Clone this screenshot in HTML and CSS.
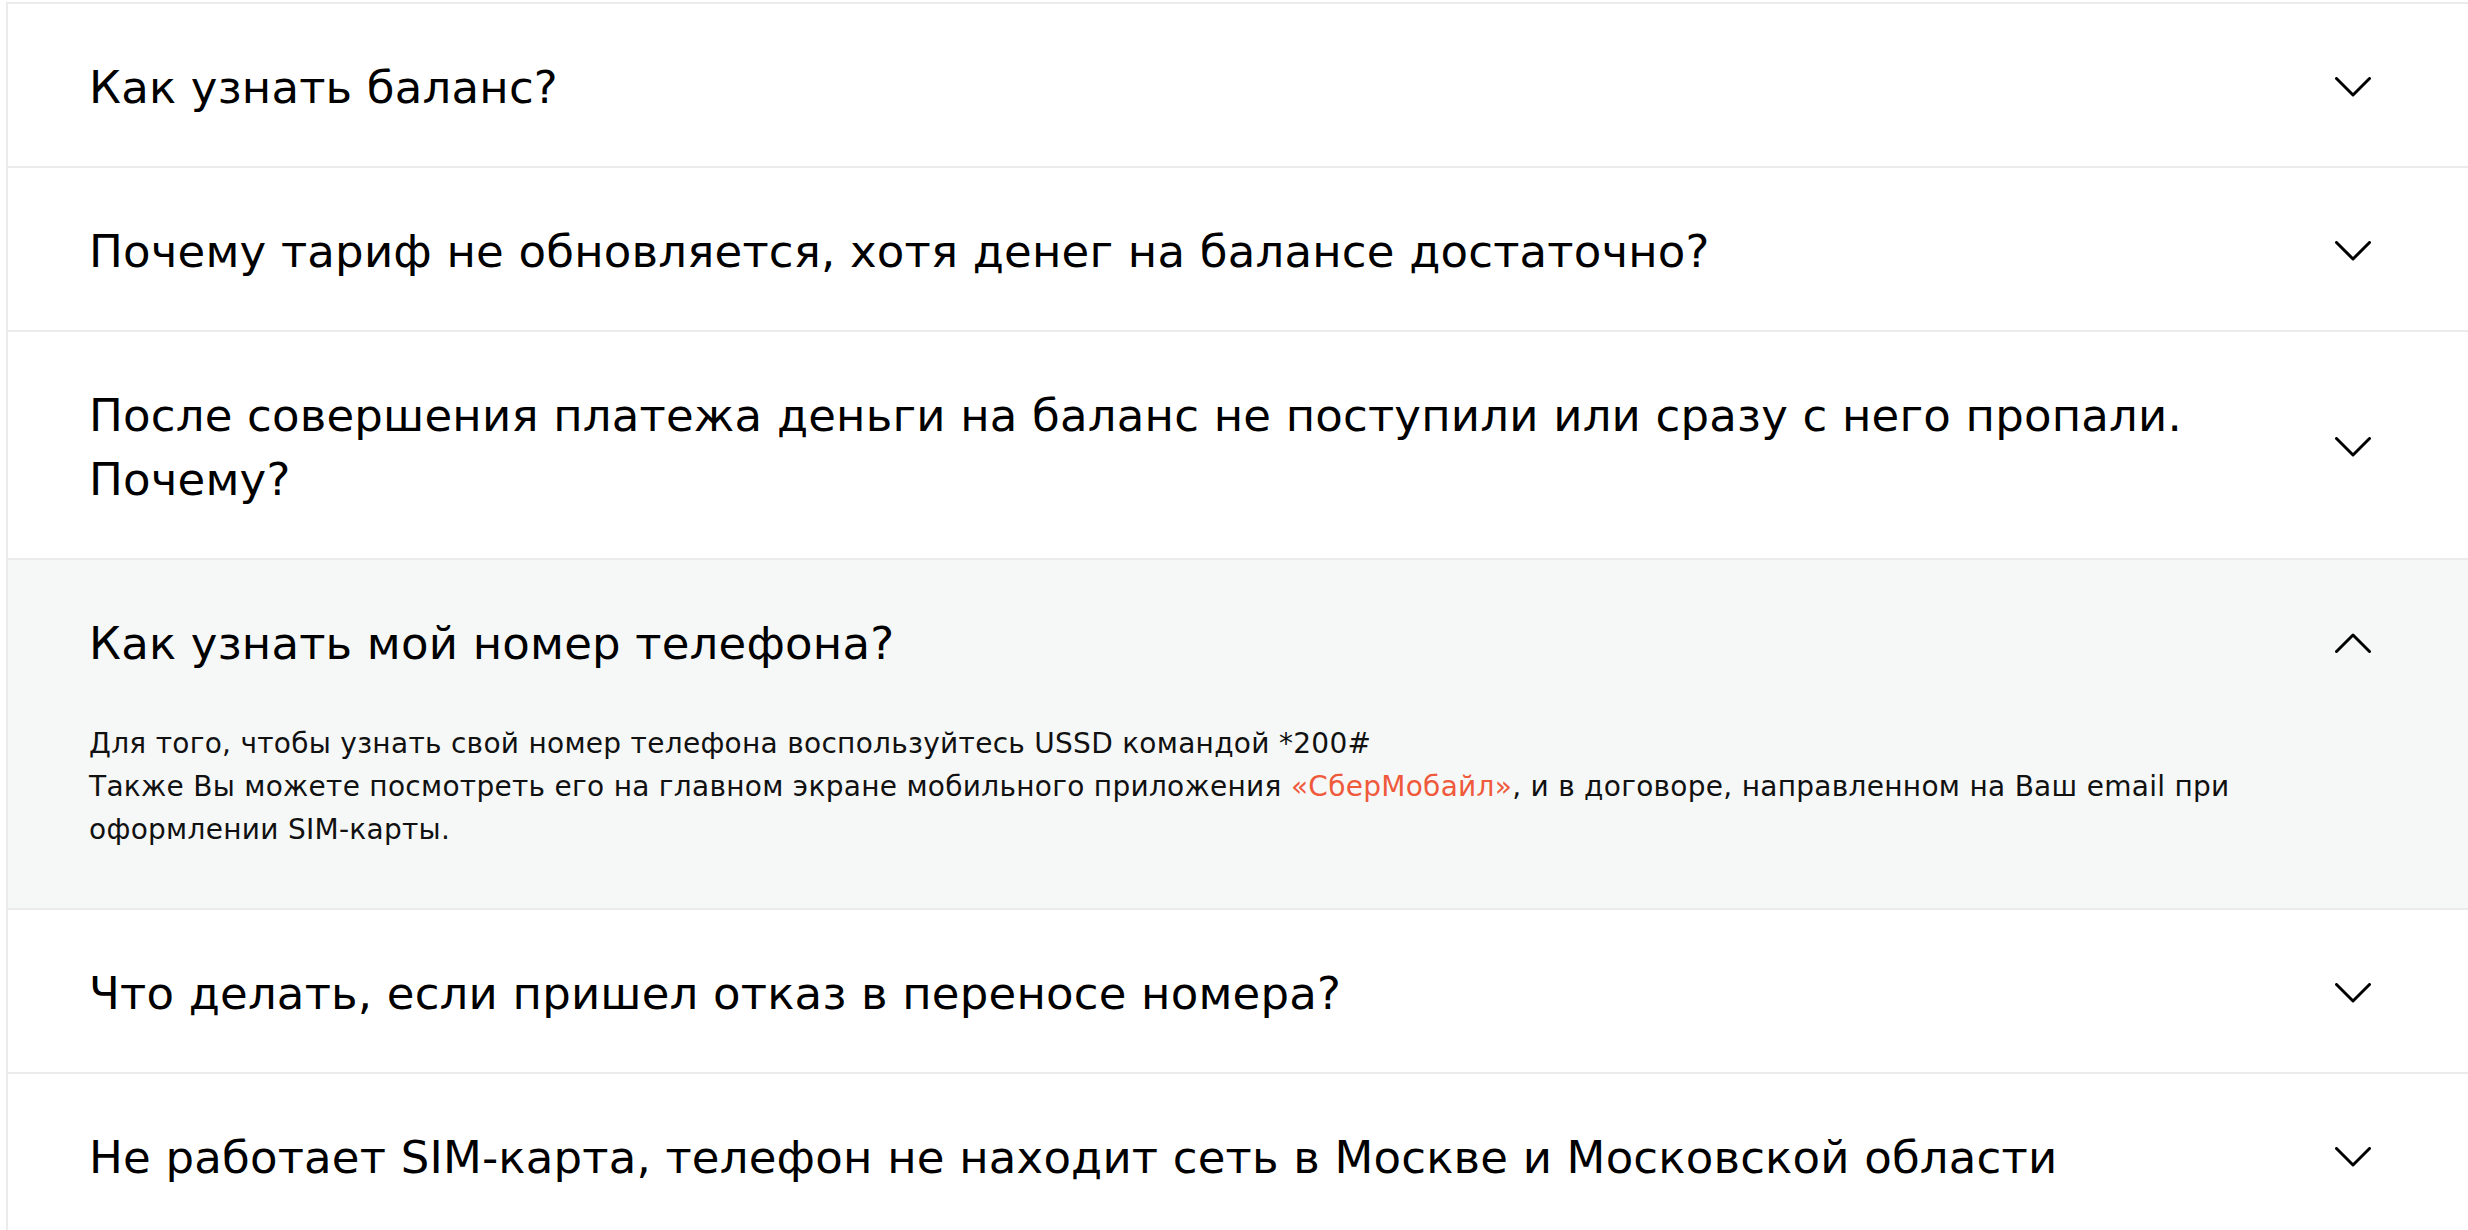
FILE: index.html
```html
<!DOCTYPE html>
<html lang="ru">
<head>
<meta charset="utf-8">
<title>FAQ</title>
<link rel="stylesheet" href="styles.css">
</head>
<body>
<div class="faq">
  <div class="item">
    <div class="head">
      <h3 class="q">Как узнать баланс?</h3>
      <svg class="chev" viewBox="0 0 36 20" width="36" height="20"><polyline points="1.5,1.5 18,18 34.5,1.5"/></svg>
    </div>
  </div>
  <div class="item">
    <div class="head">
      <h3 class="q">Почему тариф не обновляется, хотя денег на балансе достаточно?</h3>
      <svg class="chev" viewBox="0 0 36 20" width="36" height="20"><polyline points="1.5,1.5 18,18 34.5,1.5"/></svg>
    </div>
  </div>
  <div class="item">
    <div class="head">
      <h3 class="q">После совершения платежа деньги на баланс не поступили или сразу с него пропали. Почему?</h3>
      <svg class="chev" viewBox="0 0 36 20" width="36" height="20"><polyline points="1.5,1.5 18,18 34.5,1.5"/></svg>
    </div>
  </div>
  <div class="item open">
    <div class="head">
      <h3 class="q">Как узнать мой номер телефона?</h3>
      <svg class="chev up" viewBox="0 0 36 20" width="36" height="20"><polyline points="1.5,18.5 18,2 34.5,18.5"/></svg>
    </div>
    <div class="answer">
      <p class="line">Для того, чтобы узнать свой номер телефона воспользуйтесь USSD командой *200#</p>
      <p class="line">Также Вы можете посмотреть его на главном экране мобильного приложения <a class="link" href="#">«СберМобайл»</a>, и в договоре, направленном на Ваш email при оформлении SIM-карты.</p>
    </div>
  </div>
  <div class="item">
    <div class="head">
      <h3 class="q">Что делать, если пришел отказ в переносе номера?</h3>
      <svg class="chev" viewBox="0 0 36 20" width="36" height="20"><polyline points="1.5,1.5 18,18 34.5,1.5"/></svg>
    </div>
  </div>
  <div class="item">
    <div class="head">
      <h3 class="q">Не работает SIM-карта, телефон не находит сеть в Москве и Московской области</h3>
      <svg class="chev" viewBox="0 0 36 20" width="36" height="20"><polyline points="1.5,1.5 18,18 34.5,1.5"/></svg>
    </div>
  </div>
</div>
</body>
</html>
```

FILE: styles.css
```css
html, body {
  margin: 0;
  padding: 0;
  background: #ffffff;
  overflow: hidden;
}

body {
  font-family: "DejaVu Sans", "Noto Sans", sans-serif;
  color: #000000;
}

.faq {
  margin: 2px 0 0 6px;
  border-left: 2px solid #ebebeb;
}

.item {
  border-top: 2px solid #ebebeb;
  background: #ffffff;
}

.item.open {
  background: #f6f8f7;
}

.head {
  display: flex;
  align-items: center;
  padding: 49px 97px 46px 81px;
}

.q {
  flex: 1;
  margin: 0;
  padding: 3px 60px 0 0;
  font-size: 45px;
  font-weight: normal;
  line-height: 64px;
  letter-spacing: 0.2px;
  color: #000000;
}

.chev {
  flex: none;
  display: block;
  fill: none;
  stroke: #000000;
  stroke-width: 3;
  stroke-linecap: round;
  stroke-linejoin: round;
}

.answer {
  padding: 0 170px 57px 81px;
  font-size: 28px;
  line-height: 43px;
  letter-spacing: 0.28px;
  color: #111111;
}

.line {
  margin: 0;
}

.link {
  color: #ef5a3c;
  text-decoration: none;
}
```
